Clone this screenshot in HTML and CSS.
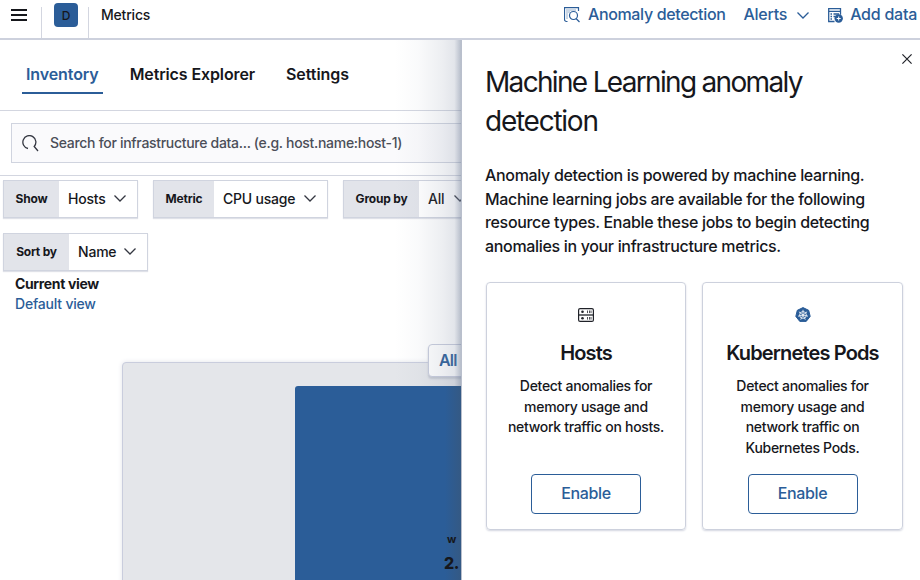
FILE: index.html
```html
<!DOCTYPE html>
<html lang="en">
<head>
<meta charset="utf-8">
<title>Metrics</title>
<link rel="stylesheet" href="styles.css">
</head>
<body>
<div class="app">
  <header class="topbar">
    <svg class="menu" viewBox="0 0 16 12" width="16" height="12"><path d="M0 1h16M0 6h16M0 11h16" stroke="#16171c" stroke-width="2"/></svg>
    <div class="space"><span class="avatar">D</span></div>
    <span class="crumb">Metrics</span>
    <nav class="actions">
      <a class="action anomaly">
        <svg viewBox="0 0 16 16" width="16" height="16" fill="none" stroke="#2b5d98" stroke-width="1.200"><path d="M3.500 14.500H2.500a2 2 0 0 1-2-2V.6h14v3.400"/><path d="M2.500 3h10M2.500 5h4M2.500 7h2M2.500 9h2M2.500 11h2" stroke-dasharray="1 1" stroke-width="1"/><circle cx="9.500" cy="8.500" r="4"/><path d="M12 11.500l3.500 3.500"/></svg>
        <span>Anomaly detection</span>
      </a>
      <a class="action alerts"><span>Alerts</span><svg viewBox="0 0 12 7" width="12" height="7" fill="none" stroke="#2b5d98" stroke-width="1.300"><path d="M.5.5 6 6 11.500.5"/></svg></a>
      <a class="action add">
        <svg viewBox="0 0 15 15" width="15" height="15" fill="none" stroke="#2b5d98"><path d="M6.500 13.500H.7V.7h11.800v6M.5 3.300h12M2.500 6h1.500M5.500 6h5.500M2.500 8.500h1.500M5.500 8.500h2M2.500 11h1.500" stroke-width="1.300"/><circle cx="10.700" cy="10.500" r="4.200" fill="#2b5d98" stroke="none"/><path d="M10.700 8.500v4M8.700 10.500h4" stroke="#fff"/></svg>
        <span>Add data</span>
      </a>
    </nav>
  </header>
  <div class="body">
    <main class="inventory">
      <nav class="tabs">
        <a class="tab active">Inventory</a>
        <a class="tab">Metrics Explorer</a>
        <a class="tab settings">Settings</a>
      </nav>
      <div class="searchbar">
        <div class="search">
          <svg viewBox="0 0 17 17" width="17" height="17" fill="none" stroke="#343741" stroke-width="1.300"><path d="M6 13.500A6.500 6.500 0 1 1 12.200 11.500L16 16"/></svg>
          <span>Search for infrastructure data... (e.g. host.name:host-1)</span>
        </div>
      </div>
      <div class="filters">
        <div class="filter show"><b>Show</b><span>Hosts</span><svg class="chev" viewBox="0 0 12 7"><path d="M.5.5 6 6 11.500.5"/></svg></div>
        <div class="filter metric"><b>Metric</b><span>CPU usage</span><svg class="chev" viewBox="0 0 12 7"><path d="M.5.5 6 6 11.500.5"/></svg></div>
        <div class="filter group"><b>Group by</b><span>All</span><svg class="chev" viewBox="0 0 12 7"><path d="M.5.5 6 6 11.500.5"/></svg></div>
        <div class="filter sort"><b>Sort by</b><span>Name</span><svg class="chev" viewBox="0 0 12 7"><path d="M.5.5 6 6 11.500.5"/></svg></div>
      </div>
      <div class="view">
        <strong>Current view</strong>
        <a>Default view</a>
      </div>
      <section class="map">
        <span class="all">All</span>
        <div class="node"><span class="name">w</span><span class="value">2.</span></div>
      </section>
    </main>
    <aside class="flyout">
      <svg class="close" viewBox="0 0 10 10" width="10" height="10"><path d="M.4.4l9.200 9.200M9.600.4L.4 9.600" stroke="#202229" stroke-width="1.200"/></svg>
      <h1><span class="first-line">Machine Learning anomaly</span><br>detection</h1>
      <p class="intro">Anomaly detection is powered by machine learning.<br>Machine learning jobs are available for the following<br>resource types. Enable these jobs to begin detecting<br>anomalies in your infrastructure metrics.</p>
      <div class="cards">
        <article class="card">
          <svg viewBox="0 0 16 14" width="16" height="14" fill="none" stroke="#202229"><rect x=".6" y=".6" width="14.800" height="12.800" rx="1.500" stroke-width="1.200"/><path d="M.5 7h15" stroke-width="1.300"/><circle cx="4.500" cy="3.800" r="1.300" fill="#202229" stroke="none"/><circle cx="4.500" cy="10.200" r="1.300" fill="#202229" stroke="none"/><path d="M9.500 2.500v2.600M11.500 2.500v2.600M13 2.500v2.600M9.500 9v2.600M11.500 9v2.600M13 9v2.600" stroke-width=".8"/></svg>
          <h2>Hosts</h2>
          <p>Detect anomalies for<br>memory usage and<br>network traffic on hosts.</p>
          <button>Enable</button>
        </article>
        <article class="card">
          <svg viewBox="0 0 16 16" width="16" height="16"><path d="M8 .6l5.700 2.700 1.500 6.100-4 5H4.800l-4-5 1.500-6.100z" fill="#2b5d98" stroke="#2b5d98" stroke-linejoin="round"/><g fill="none" stroke="#fff" stroke-width=".8"><circle cx="8" cy="8" r="3.400"/><path d="M8 2.800V8l4.100-3.200M8 8l5 1.200M8 8l2.300 4.700M8 8l-2.300 4.700M8 8l-5 1.200M8 8L3.900 4.800"/></g></svg>
          <h2>Kubernetes Pods</h2>
          <p>Detect anomalies for<br>memory usage and<br>network traffic on<br>Kubernetes Pods.</p>
          <button>Enable</button>
        </article>
      </div>
    </aside>
  </div>
</div>
</body>
</html>
```

FILE: styles.css
```css
* { box-sizing: border-box; }
body { margin: 0; background: #fff; color: #16171c; font-family: Inter, "Liberation Sans", sans-serif; font-weight: 450; overflow: hidden; }
svg { display: block; flex: none; }
a { color: #2b5d98; }
.app { width: 920px; height: 580px; display: flex; flex-direction: column; overflow: hidden; }

.topbar { flex: none; height: 40px; display: flex; align-items: flex-start; border-bottom: 2px solid #cdd1dd; white-space: nowrap; }
.menu { margin: 9px 14px 0 11px; }
.space { width: 49px; height: 38px; padding-left: 13px; background: linear-gradient(#d3d6e0, #d3d6e0) 0 7px / 1px 31px no-repeat, linear-gradient(#d3d6e0, #d3d6e0) 47px 7px / 1px 31px no-repeat; }
.avatar { width: 24px; height: 24px; margin-top: 3px; border-radius: 4px; background: #2b5d98; display: flex; align-items: center; justify-content: center; font-size: 12px; font-weight: 500; }
.crumb { margin-left: 11px; font-size: 14px; font-weight: 550; line-height: 30px; letter-spacing: -.2px; }
.actions { display: flex; margin-left: auto; margin-right: 3px; font-size: 16px; }
.action { display: flex; align-items: center; height: 30px; font-weight: 500; line-height: 28px; }
.action span { height: 30px; letter-spacing: -.25px; }
.anomaly { gap: 8px; margin-right: 18px; }
.anomaly span { letter-spacing: -.35px; }
.alerts { gap: 10px; margin-right: 19px; }
.add { gap: 7px; }

.body { flex: 1; min-height: 0; display: flex; }
.inventory { width: 461px; flex: none; overflow: hidden; position: relative; white-space: nowrap; }
.inventory::after { content: ""; position: absolute; top: 0; right: 0; bottom: 0; width: 66px; background: linear-gradient(90deg, rgba(125,137,160,0), rgba(125,137,160,.04) 35%, rgba(125,137,160,.14) 72%, rgba(125,137,160,.22) 90%, rgba(110,124,150,.5)); }
.tabs { height: 71px; display: flex; gap: 23px; padding: 14px 0 0 22px; border-bottom: 1px solid #d3d6e0; }
.tab { height: 40px; padding: 0 4px; color: #16171c; font-size: 16px; font-weight: 600; line-height: 40px; letter-spacing: -.12px; }
.tab.active { color: #2b5d98; border-bottom: 2px solid #2b5d98; letter-spacing: -.1px; }
.tab.settings { letter-spacing: -.05px; }
.searchbar { height: 65px; padding: 12px 0 0 11px; border-bottom: 1px solid #d3d6e0; }
.search { height: 40px; width: 470px; display: flex; align-items: center; gap: 11px; padding-left: 10px; border: 1px solid #d0d4df; background: #fafafc; color: #4b4e58; font-size: 14px; letter-spacing: -.3px; }
.search span { line-height: 18px; margin-top: -1px; }
.filters { width: 500px; padding: 4px 0 0 3px; display: grid; grid-template-columns: auto auto auto; justify-content: start; gap: 15px; }
.filter { height: 38px; display: flex; align-items: center; border: 1px solid #d0d4df; box-shadow: 0 1px 1px #dfe1e8; font-size: 14px; background: #fff; }
.filter b { align-self: stretch; display: flex; align-items: center; justify-content: center; background: #e2e4ea; font-size: 12px; font-weight: 700; letter-spacing: -.2px; padding-bottom: 1px; }
.filter span { margin-left: 9px; margin-top: -2px; letter-spacing: -.2px; }
.chev { width: 12px; height: 7px; margin-top: -1px; margin-left: auto; margin-right: 11px; fill: none; stroke: #343741; stroke-width: 1.300; }
.show { width: 135px; }
.show b { width: 55px; }
.metric { width: 175px; }
.metric b { width: 60px; }
.group { width: 140px; }
.group b { width: 75px; }
.group .chev { margin-left: 10px; }
.sort { width: 145px; grid-column: 1 / 3; }
.sort b { width: 65px; }
.view { padding: 3px 0 0 15px; display: flex; flex-direction: column; font-size: 14px; line-height: 20px; letter-spacing: -.2px; }
.view strong { font-weight: 700; letter-spacing: -.35px; }
.map { position: relative; margin: 48px 0 0 122px; width: 500px; height: 240px; padding: 23px 0 0 172px; background: #e4e6ea; border: 1px solid #c9cddd; border-radius: 4px; box-shadow: 0 0 5px #e2e4ea; }
.all { position: absolute; left: 305px; top: -19px; width: 60px; height: 33px; padding-left: 10px; border: 1px solid #c9cddd; border-radius: 4px; background: #fff; box-shadow: 0 2px 2px #c5c9d2; color: #2b5d98; font-size: 16px; font-weight: 600; line-height: 30px; letter-spacing: -.8px; }
.node { position: relative; z-index: 1; height: 220px; background: linear-gradient(90deg, #2b5d98 150px, #345984 166px); border-radius: 3px 0 0; display: flex; flex-direction: column; padding: 145px 0 0 149px; }
.name { margin-left: 3px; font-size: 11px; font-weight: 700; line-height: 16px; }
.value { font-size: 16px; font-weight: 800; line-height: 33px; letter-spacing: -.5px; }

.flyout { position: relative; flex: 1; border-left: 1px solid #b9bfcc; background: #fff; padding: 23px 17px 0 24px; z-index: 1; }
.close { position: absolute; left: 440px; top: 14px; }
h1 { margin: 0 0 0 -1px; font-size: 28px; font-weight: 380; line-height: 39px; letter-spacing: -1.25px; white-space: nowrap; }
.first-line { letter-spacing: -1.68px; }
.intro { margin: 23px 0 24px -1px; font-size: 16px; line-height: 23.500px; letter-spacing: -.33px; white-space: nowrap; }
.cards { display: grid; grid-template-columns: 200px 201px; gap: 16px; }
.card { height: 248px; display: flex; flex-direction: column; align-items: center; text-align: center; padding: 24px 0 15px; border: 1px solid #cdd1dd; border-radius: 4px; box-shadow: 0 1px 2px #d3d6e0; white-space: nowrap; }
.card svg { height: 16px; }
.card h2 { margin: 15px 0 8px; font-size: 20px; font-weight: 600; line-height: 30px; letter-spacing: -.85px; }
.card p { margin: 0; font-size: 14px; line-height: 20.500px; letter-spacing: -.3px; }
.card button { margin-top: auto; width: 110px; height: 40px; padding: 0 0 2px; border: 1px solid #2b5d98; border-radius: 4px; background: #fff; color: #2b5d98; font: 500 16px Inter, sans-serif; letter-spacing: -.35px; }
```
